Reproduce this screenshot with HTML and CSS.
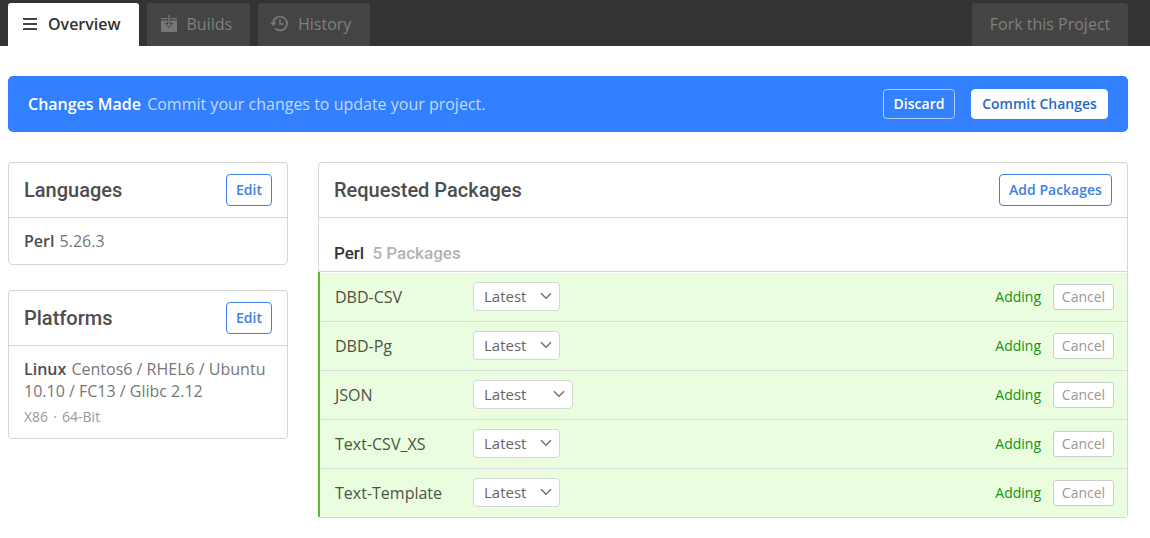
FILE: index.html
```html
<!DOCTYPE html>
<html lang="en">
<head>
<meta charset="utf-8">
<title>Project Overview</title>
<link rel="stylesheet" href="styles.css">
</head>
<body>
<nav class="tabs">
  <a class="tab tab-active">
    <svg class="icon-menu" width="14" height="12" viewBox="0 0 14 12"><path d="M0 1h14M0 6h14M0 11h14" stroke="#444" stroke-width="1.800"/></svg>
    <span>Overview</span>
  </a>
  <a class="tab tab-builds">
    <svg width="16" height="17" viewBox="0 0 16 17"><path fill="#777" d="M0 3h6.500v1.200H0zM9.500 3H16v1.200H9.500zM0 5.500h6.500V8H3.800L8 13.200 12.200 8H9.500V5.500H16V17H0z"/><path fill="#777" d="M7.300 0h1.400v9h2L8 12 5.300 9h2z"/></svg>
    <span>Builds</span>
  </a>
  <a class="tab tab-history">
    <svg width="18" height="17" viewBox="0 0 18 17" fill="none" stroke="#777" stroke-width="1.900"><path d="M3.200 8.500a6.900 6.900 0 1 1 2 4.900"/><path stroke-width="1.600" d="M10 4.500V9h4"/><path d="M0 7.500h6.600L3.200 11.300z" fill="#777" stroke="none"/></svg>
    <span>History</span>
  </a>
  <a class="tab tab-fork"><span>Fork this Project</span></a>
</nav>
<main class="page">
  <section class="banner">
    <p class="banner-text"><strong>Changes Made</strong> <span>Commit your changes to update your project.</span></p>
    <button class="button discard">Discard</button>
    <button class="button commit">Commit Changes</button>
  </section>
  <div class="columns">
    <aside class="sidebar">
      <section class="card">
        <header class="card-head"><h2>Languages</h2><button class="button edit">Edit</button></header>
        <div class="card-body languages"><strong>Perl</strong> 5.26.3</div>
      </section>
      <section class="card">
        <header class="card-head"><h2>Platforms</h2><button class="button edit">Edit</button></header>
        <div class="card-body platforms"><div><strong>Linux</strong> Centos6 / RHEL6 / Ubuntu<br>10.10 / FC13 / Glibc 2.12</div><small>X86 · 64-Bit</small></div>
      </section>
    </aside>
    <section class="card packages">
      <header class="card-head"><h2>Requested Packages</h2><button class="button add">Add Packages</button></header>
      <h3 class="group">Perl <span>5 Packages</span></h3>
      <ul class="rows">
        <li class="row"><span class="name">DBD-CSV</span><span class="select">Latest<svg width="12" height="8" viewBox="0 0 12 8"><path d="M1 1.200l5 5 5-5"/></svg></span><span class="status">Adding</span><button class="cancel">Cancel</button></li>
        <li class="row"><span class="name">DBD-Pg</span><span class="select">Latest<svg width="12" height="8" viewBox="0 0 12 8"><path d="M1 1.200l5 5 5-5"/></svg></span><span class="status">Adding</span><button class="cancel">Cancel</button></li>
        <li class="row"><span class="name">JSON</span><span class="select select-wide">Latest<svg width="12" height="8" viewBox="0 0 12 8"><path d="M1 1.200l5 5 5-5"/></svg></span><span class="status">Adding</span><button class="cancel">Cancel</button></li>
        <li class="row"><span class="name">Text-CSV_XS</span><span class="select">Latest<svg width="12" height="8" viewBox="0 0 12 8"><path d="M1 1.200l5 5 5-5"/></svg></span><span class="status">Adding</span><button class="cancel">Cancel</button></li>
        <li class="row"><span class="name">Text-Template</span><span class="select">Latest<svg width="12" height="8" viewBox="0 0 12 8"><path d="M1 1.200l5 5 5-5"/></svg></span><span class="status">Adding</span><button class="cancel">Cancel</button></li>
      </ul>
    </section>
  </div>
</main>
</body>
</html>
```
FILE: styles.css
```css
* { box-sizing: border-box; }
body { margin: 0; background: #fff; color: #777; font: 16px/22px "Open Sans", sans-serif; }
h2, h3, p, ul { margin: 0; padding: 0; }
strong { font-weight: 600; }
button { margin: 0; font-family: inherit; }

.tabs { display: flex; gap: 8px; height: 46px; padding: 3px 22px 0 8px; background: #333; }
.tab { display: flex; align-items: center; height: 43px; background: #444; color: #808080; border-radius: 3px 3px 0 0; white-space: nowrap; }
.tab span { padding-bottom: 1px; }
.tab svg { margin-bottom: 2px; }
.tab .icon-menu { margin-bottom: 1px; }
.tab-active { width: 131px; padding-left: 15px; gap: 11px; background: #fff; color: #333; font-weight: 600; }
.tab-builds { width: 103px; padding-left: 14px; gap: 9.500px; }
.tab-history { width: 112px; padding-left: 12px; gap: 10px; }
.tab-fork { width: 156px; margin-left: auto; justify-content: center; }

.page { padding: 30px 22px 0 8px; }
.banner { display: flex; align-items: center; height: 56px; padding: 0 20px; background: #3380ff; border-radius: 5px; color: #fff; }
.banner-text { flex: 1; }
.banner-text span { margin-left: 2px; color: #c2d9ff; }
.button { display: block; padding: 0 0 2px; border-radius: 4px; border: 1px solid #3d7fe6; background: #fff; color: #3d7fe6; font-size: 14px; font-weight: 600; white-space: nowrap; }
.discard { width: 72px; height: 30px; margin-right: 16px; background: transparent; border-color: #adccff; color: #fff; }
.commit { width: 137px; height: 30px; border-color: #fff; color: #2968c8; }

.columns { display: flex; gap: 30px; align-items: flex-start; margin-top: 30px; }
.sidebar { display: flex; flex-direction: column; gap: 25px; width: 280px; }
.card { border: 1px solid #d6d6d6; border-radius: 4px; }
.card-head { display: flex; justify-content: space-between; align-items: center; height: 55px; padding: 0 15px; border-bottom: 1px solid #d6d6d6; }
.card-head h2 { font: 500 20px/24px Roboto, sans-serif; color: #4d4d4d; }
.card strong { margin-right: 1px; color: #4d4d4d; }
.edit { width: 46px; height: 32px; }
.add { width: 113px; height: 32px; }
.card-body { padding: 12px 15px; white-space: nowrap; }
.languages { height: 46px; }
.platforms { height: 92px; }
.platforms small { display: block; margin-top: 4px; font-size: 14px; line-height: 22px; color: #999; word-spacing: 1.500px; }

.packages { flex: 1; border-left: 0; }
.packages .card-head, .group { border-left: 1px solid #d6d6d6; }
.packages .card-head { border-top-left-radius: 4px; }
.group { height: 54px; padding: 24px 15px 0; border-bottom: 1px solid #d6d6d6; font: 500 17px/22px Roboto, sans-serif; color: #333; }
.group span { margin-left: 4px; color: #b3b3b3; }
.rows { list-style: none; border-left: 2px solid #5fb83a; }
.row { display: flex; align-items: center; height: 49px; padding: 0 13px 0 15px; background: #eafedf; border-top: 1px solid #d9dcdc; }
.row:first-child { border-top-color: #fff; }
.name { width: 138px; color: #4a5444; }
.select { display: flex; align-items: center; justify-content: space-between; width: 87px; height: 29px; margin-bottom: 1px; padding: 0 7px 1px 10px; background: #fff; border: 1px solid #d6d6d6; border-radius: 4px; font-size: 15px; color: #666; }
.select-wide { width: 100px; }
.select svg { margin-bottom: 1px; fill: none; stroke: #707070; stroke-width: 1.500; }
.status { margin-left: auto; color: #149114; font-size: 14px; }
.cancel { width: 61px; height: 26px; margin-left: 12px; padding: 0 0 2px; border: 1px solid #ccc; border-radius: 3px; background: #fff; color: #999; font-size: 14px; }
```
